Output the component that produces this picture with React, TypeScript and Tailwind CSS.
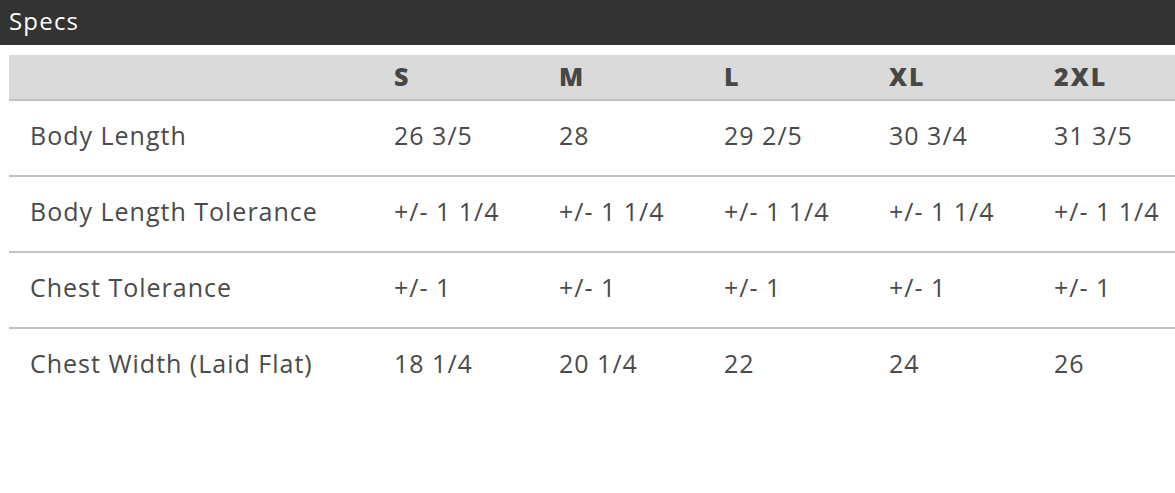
const sizes = ["S", "M", "L", "XL", "2XL"];

const rows = [
  { label: "Body Length", values: ["26 3/5", "28", "29 2/5", "30 3/4", "31 3/5"] },
  { label: "Body Length Tolerance", values: ["+/- 1 1/4", "+/- 1 1/4", "+/- 1 1/4", "+/- 1 1/4", "+/- 1 1/4"] },
  { label: "Chest Tolerance", values: ["+/- 1", "+/- 1", "+/- 1", "+/- 1", "+/- 1"] },
  { label: "Chest Width (Laid Flat)", values: ["18 1/4", "20 1/4", "22", "24", "26"] },
];

export default function App() {
  return (
    <div className="w-[1175px] h-[493px] overflow-hidden bg-white font-['Open_Sans',sans-serif] text-[#4a4a4a]">
      <div className="h-[45px] bg-[#333333] px-[9px] flex items-center">
        <h2 className="text-white text-[24px] leading-none pb-[4px] tracking-[1.2px]">Specs</h2>
      </div>
      <div className="pl-[9px] pt-[10px]">
        <table className="border-collapse table-fixed w-[1190px] text-[25px] tracking-[1px]">
          <colgroup>
            <col className="w-[365px]" />
            {sizes.map((s) => (
              <col key={s} className="w-[165px]" />
            ))}
          </colgroup>
          <thead>
            <tr className="bg-[#dadada] border-b-2 border-[#c2c2c2] h-[45px]">
              <th className="px-[21px]"></th>
              {sizes.map((s) => (
                <th key={s} className="text-left px-[20px] pb-[2px] font-extrabold text-[#474747] leading-none tracking-[2px]">
                  {s}
                </th>
              ))}
            </tr>
          </thead>
          <tbody>
            {rows.map((r, i) => (
              <tr key={r.label} className={`h-[76px] ${i < rows.length - 1 ? "border-b-2 border-[#c2c2c2]" : ""}`}>
                <td className="px-[21px] pb-[5px] whitespace-nowrap">{r.label}</td>
                {r.values.map((v, j) => (
                  <td key={j} className="px-[20px] pb-[5px] whitespace-nowrap">
                    {v}
                  </td>
                ))}
              </tr>
            ))}
          </tbody>
        </table>
      </div>
    </div>
  );
}
